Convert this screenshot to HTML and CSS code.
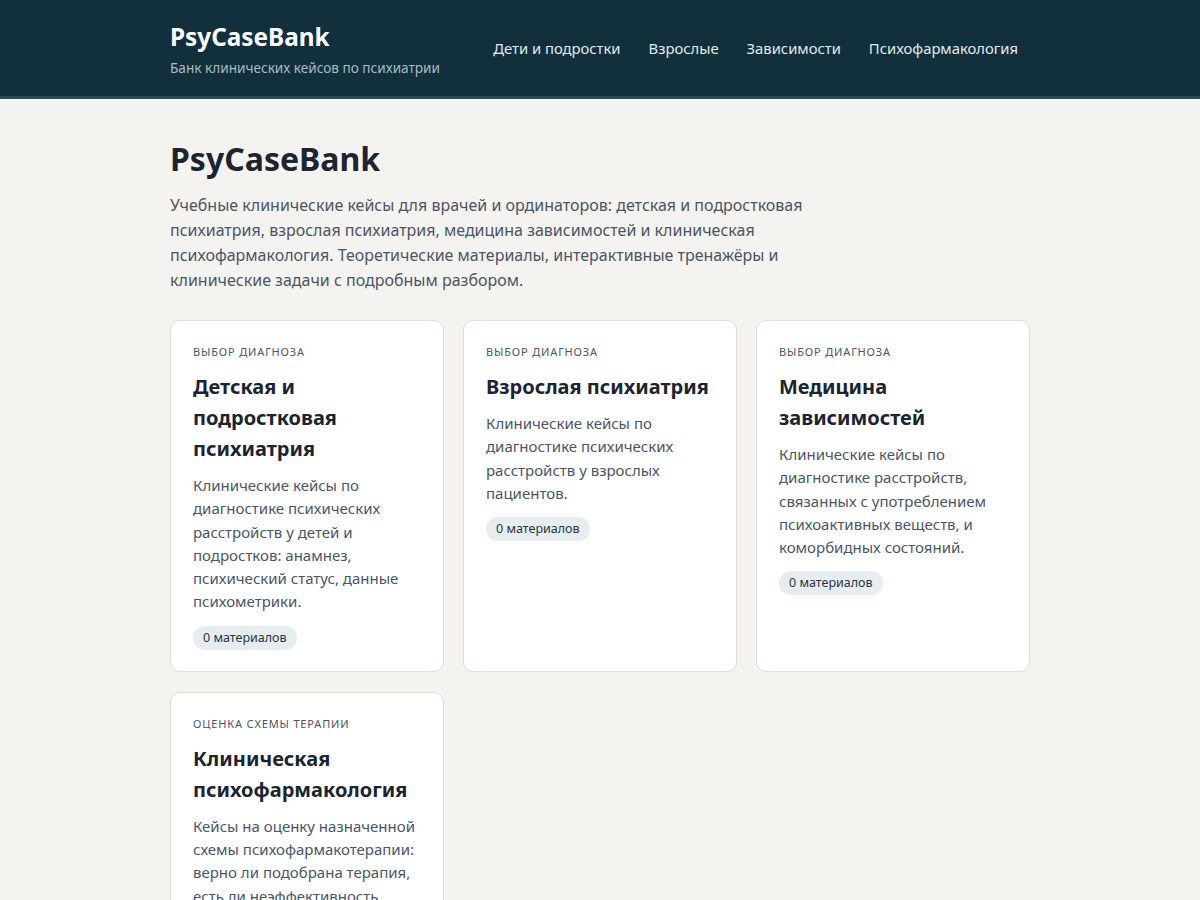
FILE: index.html
```html
<!DOCTYPE html>
<html lang="ru">
<head>
<meta charset="utf-8">
<title>PsyCaseBank</title>
<link rel="stylesheet" href="styles.css">
</head>
<body>
<header class="site-header">
  <div class="container header-inner">
    <div class="brand">
      <div class="brand-title">PsyCaseBank</div>
      <div class="brand-sub">Банк клинических кейсов по психиатрии</div>
    </div>
    <nav class="nav">
      <a href="#">Дети и подростки</a>
      <a href="#">Взрослые</a>
      <a href="#">Зависимости</a>
      <a href="#">Психофармакология</a>
    </nav>
  </div>
</header>
<main class="container main">
  <h1 class="page-title">PsyCaseBank</h1>
  <p class="intro">Учебные клинические кейсы для врачей и ординаторов: детская и подростковая психиатрия, взрослая психиатрия, медицина зависимостей и клиническая психофармакология. Теоретические материалы, интерактивные тренажёры и клинические задачи с подробным разбором.</p>
  <div class="cards">
    <article class="card">
      <div class="card-label">Выбор диагноза</div>
      <h2 class="card-title">Детская и подростковая психиатрия</h2>
      <p class="card-desc">Клинические кейсы по диагностике психических расстройств у детей и подростков: анамнез, психический статус, данные психометрики.</p>
      <span class="badge">0 материалов</span>
    </article>
    <article class="card">
      <div class="card-label">Выбор диагноза</div>
      <h2 class="card-title">Взрослая психиатрия</h2>
      <p class="card-desc">Клинические кейсы по диагностике психических расстройств у взрослых пациентов.</p>
      <span class="badge">0 материалов</span>
    </article>
    <article class="card">
      <div class="card-label">Выбор диагноза</div>
      <h2 class="card-title">Медицина зависимостей</h2>
      <p class="card-desc">Клинические кейсы по диагностике расстройств, связанных с употреблением психоактивных веществ, и коморбидных состояний.</p>
      <span class="badge">0 материалов</span>
    </article>
    <article class="card">
      <div class="card-label">Оценка схемы терапии</div>
      <h2 class="card-title">Клиническая психофармакология</h2>
      <p class="card-desc">Кейсы на оценку назначенной схемы психофармакотерапии: верно ли подобрана терапия, есть ли неэффективность, побочные эффекты или риски взаимодействий.</p>
      <span class="badge">0 материалов</span>
    </article>
  </div>
</main>
</body>
</html>
```
FILE: styles.css
```css
* { box-sizing: border-box; }
html, body { margin: 0; padding: 0; }
body {
  background: #f5f3ef;
  font-family: "Noto Sans", "Open Sans", sans-serif;
  color: #1b2430;
}
.container {
  width: 860px;
  margin: 0 auto;
}
.site-header {
  background: #11303b;
  border-bottom: 3px solid #244f58;
}
.header-inner {
  display: flex;
  align-items: center;
  justify-content: space-between;
  height: 96px;
  padding-top: 4px;
}
.brand-title {
  font-size: 24.3px;
  font-weight: 700;
  line-height: 29px;
  color: #ffffff;
}
.brand-sub {
  margin-top: 7px;
  font-size: 13.6px;
  line-height: 20px;
  color: #a9bcc3;
}
.nav {
  display: flex;
  gap: 28px;
  margin-top: -4px;
  padding-right: 12px;
}
.nav a {
  color: #e2eaec;
  text-decoration: none;
  font-size: 14.8px;
  line-height: 20px;
}
.main {
  padding-top: 41px;
  padding-bottom: 40px;
}
.page-title {
  margin: 0;
  font-size: 32px;
  line-height: 38px;
  font-weight: 700;
  color: #1b2430;
}
.intro {
  margin: 15px 0 27px;
  max-width: 640px;
  font-size: 16px;
  line-height: 25px;
  color: #4a5566;
}
.cards {
  display: grid;
  grid-template-columns: repeat(3, 1fr);
  gap: 20px 19px;
  align-items: start;
}
.card {
  background: #ffffff;
  border: 1px solid #e2ddd3;
  border-radius: 10px;
  padding: 23px 22px 21px;
  display: flex;
  flex-direction: column;
  align-items: flex-start;
  align-self: stretch;
}
.card-label {
  font-size: 11px;
  line-height: 16px;
  letter-spacing: 0.85px;
  text-transform: uppercase;
  color: #4a5566;
}
.card-title {
  margin: 11px 0 0;
  font-size: 20px;
  line-height: 31px;
  font-weight: 700;
  color: #1b2430;
}
.card-desc {
  margin: 10px 0 0;
  font-size: 15px;
  line-height: 23.3px;
  color: #4a5566;
}
.badge {
  margin-top: 12px;
  display: inline-block;
  background: #e6edf0;
  color: #2a3440;
  font-size: 12.5px;
  line-height: 24px;
  padding: 0 10px;
  border-radius: 12px;
}
```
